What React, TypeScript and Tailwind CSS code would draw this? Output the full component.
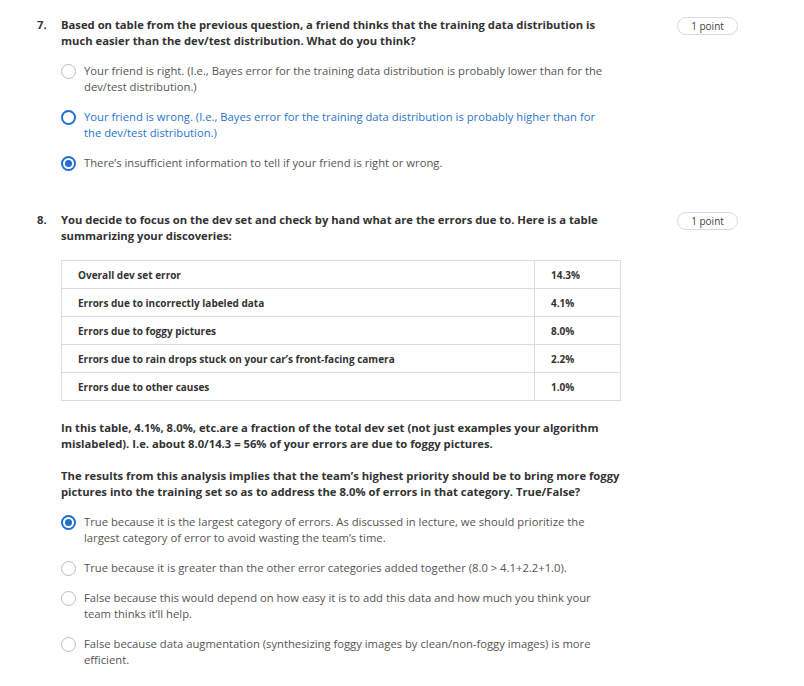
import React from "react";

type Opt = { text: string; state?: "checked" | "focus" };

const q7Options: Opt[] = [
  { text: "Your friend is right. (I.e., Bayes error for the training data distribution is probably lower than for the dev/test distribution.)" },
  { text: "Your friend is wrong. (I.e., Bayes error for the training data distribution is probably higher than for the dev/test distribution.)", state: "focus" },
  { text: "There’s insufficient information to tell if your friend is right or wrong.", state: "checked" },
];

const q8Options: Opt[] = [
  { text: "True because it is the largest category of errors. As discussed in lecture, we should prioritize the largest category of error to avoid wasting the team’s time.", state: "checked" },
  { text: "True because it is greater than the other error categories added together (8.0 > 4.1+2.2+1.0)." },
  { text: "False because this would depend on how easy it is to add this data and how much you think your team thinks it’ll help." },
  { text: "False because data augmentation (synthesizing foggy images by clean/non-foggy images) is more efficient." },
];

const rows = [
  ["Overall dev set error", "14.3%"],
  ["Errors due to incorrectly labeled data", "4.1%"],
  ["Errors due to foggy pictures", "8.0%"],
  ["Errors due to rain drops stuck on your car’s front-facing camera", "2.2%"],
  ["Errors due to other causes", "1.0%"],
];

function Radio({ state }: { state?: Opt["state"] }) {
  if (state === "checked") {
    return (
      <span className="flex h-[15px] w-[15px] shrink-0 items-center justify-center rounded-full border-2 border-[#1f6fd0]">
        <span className="h-[7px] w-[7px] rounded-full bg-[#1f6fd0]" />
      </span>
    );
  }
  if (state === "focus") {
    return <span className="h-[15px] w-[15px] shrink-0 rounded-full border-2 border-[#1f6fd0]" />;
  }
  return <span className="h-[15px] w-[15px] shrink-0 rounded-full border-[1.5px] border-[#bdbdbd]" />;
}

function Option({ opt }: { opt: Opt }) {
  return (
    <div className="mt-[14px] flex items-start gap-[8px]">
      <div className="flex h-[16px] items-center">
        <Radio state={opt.state} />
      </div>
      <p className={`w-[526px] ${opt.state === "focus" ? "text-[#2a73cc]" : "text-[#555]"}`}>{opt.text}</p>
    </div>
  );
}

function Badge() {
  return (
    <div className="flex h-[18px] w-[61px] items-center justify-center rounded-full border border-[#dadada] text-[10px] text-[#444]">
      1 point
    </div>
  );
}

function Question({ num, children }: { num: string; children: React.ReactNode }) {
  return (
    <div className="flex">
      <div className="w-[24px] shrink-0 font-bold text-[#333]">{num}</div>
      <div className="w-[560px] shrink-0">{children}</div>
      <div className="flex flex-1 justify-end">
        <Badge />
      </div>
    </div>
  );
}

export default function App() {
  return (
    <div
      className="min-h-[686px] bg-white pl-[37px] pr-[66px] pt-[17px] text-[11.25px] leading-[16px]"
      style={{ fontFamily: '"Open Sans", "Liberation Sans", sans-serif' }}
    >
      <Question num="7.">
        <p className="font-bold text-[#333]">
          Based on table from the previous question, a friend thinks that the training data distribution is much easier than the dev/test distribution. What do you think?
        </p>
        {q7Options.map((o, i) => (
          <Option key={i} opt={o} />
        ))}
      </Question>

      <div className="mt-[41px]">
        <Question num="8.">
          <p className="font-bold text-[#333]">
            You decide to focus on the dev set and check by hand what are the errors due to. Here is a table summarizing your discoveries:
          </p>
          <table className="mt-[16px] w-[560px] border-collapse text-[10px] font-bold text-[#333]">
            <tbody>
              {rows.map(([label, val]) => (
                <tr key={label} className="h-[28px]">
                  <td className="border border-[#dcdcdc] pl-[16px]">{label}</td>
                  <td className="w-[86px] border border-[#dcdcdc] pl-[16px]">{val}</td>
                </tr>
              ))}
            </tbody>
          </table>
          <p className="mt-[19px] font-bold text-[#333]">
            In this table, 4.1%, 8.0%, etc.are a fraction of the total dev set (not just examples your algorithm mislabeled). I.e. about 8.0/14.3 = 56% of your errors are due to foggy pictures.
          </p>
          <p className="mt-[16px] font-bold text-[#333]">
            The results from this analysis implies that the team’s highest priority should be to bring more foggy pictures into the training set so as to address the 8.0% of errors in that category. True/False?
          </p>
          {q8Options.map((o, i) => (
            <Option key={i} opt={o} />
          ))}
        </Question>
      </div>
    </div>
  );
}
